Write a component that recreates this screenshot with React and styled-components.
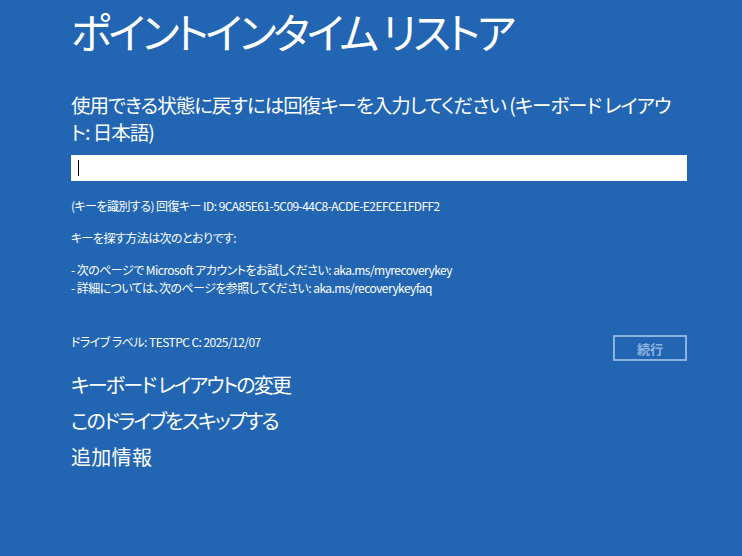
import React from "react";
import styled, { createGlobalStyle } from "styled-components";

const GlobalStyle = createGlobalStyle`
  html, body {
    margin: 0;
    padding: 0;
    background: #2266b3;
  }
  body {
    font-family: "Noto Sans CJK JP", "Noto Sans", sans-serif;
    font-feature-settings: "palt";
    color: #ffffff;
  }
`;

function App() {
  return (
    <>
      <GlobalStyle />
      <Screen>
        <Title>ポイントインタイム リストア</Title>
        <Prompt>使用できる状態に戻すには回復キーを入力してください (キーボード レイアウト: 日本語)</Prompt>
        <KeyInput>
          <Caret />
        </KeyInput>
        <InfoBlock>
          <Info>(キーを識別する) 回復キー ID: 9CA85E61-5C09-44C8-ACDE-E2EFCE1FDFF2</Info>
          <Info $gap>キーを探す方法は次のとおりです:</Info>
          <Info $gap>- 次のページで Microsoft アカウントをお試しください: aka.ms/myrecoverykey</Info>
          <Info>- 詳細については、次のページを参照してください: aka.ms/recoverykeyfaq</Info>
        </InfoBlock>
        <DriveRow>
          <Info>ドライブ ラベル: TESTPC C: 2025/12/07</Info>
          <ContinueButton disabled>続行</ContinueButton>
        </DriveRow>
        <Links>
          <LinkItem>キーボード レイアウトの変更</LinkItem>
          <LinkItem>このドライブをスキップする</LinkItem>
          <LinkItem $kanji>追加情報</LinkItem>
        </Links>
      </Screen>
    </>
  );
}

export default App;

const Screen = styled.div`
  width: 616px;
  height: 556px;
  padding: 0 0 0 71px;
  box-sizing: content-box;
  overflow: hidden;
`;

const Title = styled.h1`
  margin: 0;
  padding-top: 3px;
  font-size: 42px;
  font-weight: 400;
  line-height: 56px;
  letter-spacing: -3.2px;
`;

const Prompt = styled.p`
  margin: 32px 0 0;
  font-size: 19.5px;
  line-height: 27px;
  letter-spacing: -1px;
`;

const KeyInput = styled.div`
  margin-top: 10px;
  height: 26px;
  background: #ffffff;
  display: flex;
  align-items: center;
  padding-left: 7px;
`;

const Caret = styled.span`
  width: 1px;
  height: 16px;
  background: #000000;
`;

const InfoBlock = styled.div`
  margin-top: 16px;
`;

const Info = styled.p`
  margin: ${(p) => (p.$gap ? "14px" : "0")} 0 0;
  font-size: 12px;
  line-height: 18px;
  letter-spacing: -0.55px;
`;

const DriveRow = styled.div`
  display: flex;
  justify-content: space-between;
  align-items: flex-start;
  margin-top: 36px;
`;

const ContinueButton = styled.button`
  width: 74px;
  height: 26px;
  margin-top: 2px;
  background: transparent;
  border: 2px solid #8cb3e0;
  color: #8cb3e0;
  font-family: "Noto Sans CJK JP", sans-serif;
  font-size: 13px;
  font-weight: 700;
  padding: 0;
`;

const Links = styled.div`
  display: flex;
  flex-direction: column;
  margin-top: 6px;
`;

const LinkItem = styled.div`
  font-size: 20px;
  line-height: 36px;
  letter-spacing: ${(p) => (p.$kanji ? "0.3px" : "-1.8px")};
`;
